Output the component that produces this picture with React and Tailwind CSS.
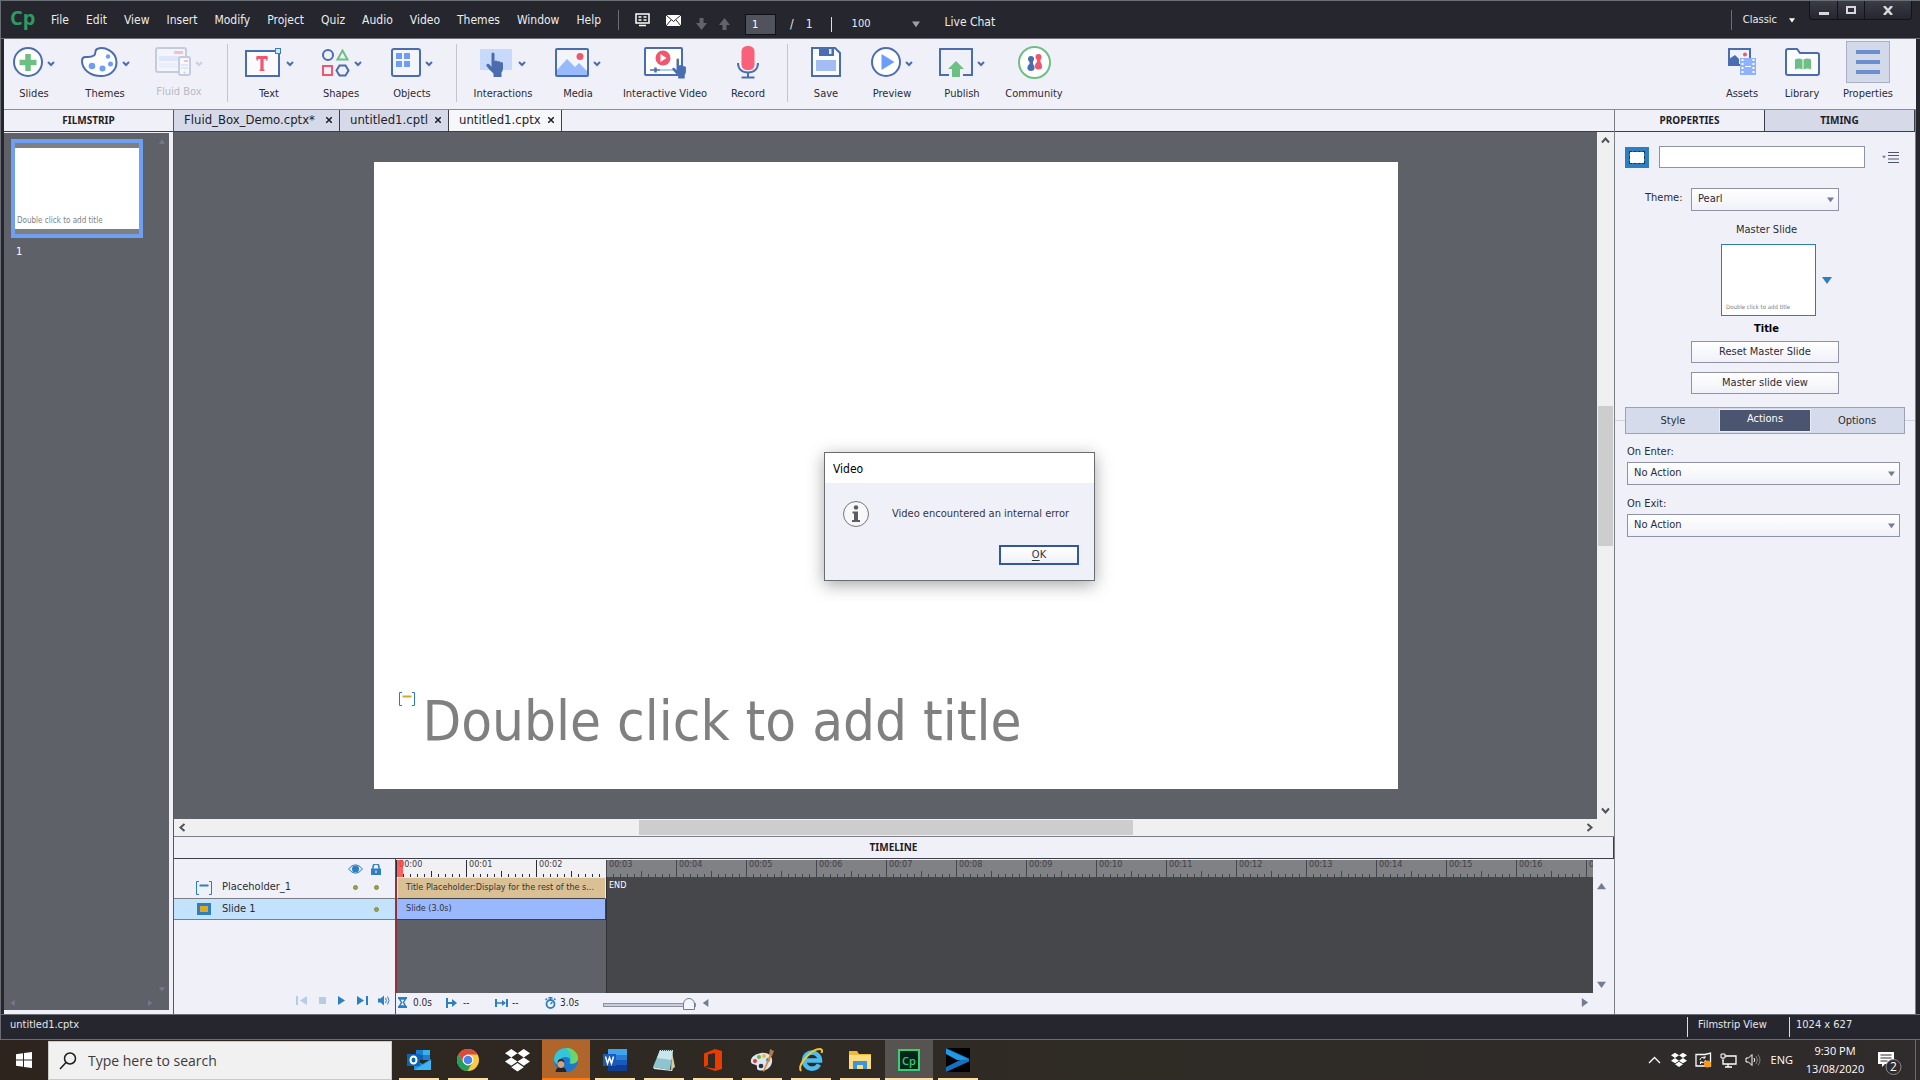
import React from "react";

const BLUE = "#4a6db0";
const SOFT = "#6f9df5";
const GREEN = "#6cc083";
const RED = "#f0566e";

/* ---------- toolbar icons ---------- */

const Chevron = ({ faded }) => (
  <svg width="8" height="6" viewBox="0 0 8 6" className="mt-1 shrink-0">
    <path d="M1 1l3 3 3-3" fill="none" stroke={faded ? "#c9d0e2" : BLUE} strokeWidth="2" />
  </svg>
);

const SlidesIcon = () => (
  <svg width="30" height="30" viewBox="0 0 30 30">
    <circle cx="15" cy="15" r="14" fill="#fff" stroke={BLUE} strokeWidth="2" />
    <path d="M15 7v17M6.500 15.500h17" stroke={GREEN} strokeWidth="5.500" />
  </svg>
);

const PaletteIcon = () => (
  <svg width="37" height="30" viewBox="0 0 37 30">
    <path
      d="M13 8.500C15.500 7 13 3.500 16 2 23 -1 35.500 4 35.500 15.500 35.500 24 28 29 20 29 9.500 29 1 22.500 1 14 1 11.500 2.500 10 4.500 10 8 10 10 10.500 13 8.500Z"
      fill="#fff" stroke={BLUE} strokeWidth="2"
    />
    <circle cx="11" cy="19" r="3.300" fill={SOFT} />
    <circle cx="21.500" cy="21.500" r="3" fill={SOFT} />
    <circle cx="29.500" cy="17" r="2.500" fill={SOFT} />
    <circle cx="27" cy="9.500" r="2.200" fill={SOFT} />
  </svg>
);

const FluidIcon = () => (
  <svg width="36" height="30" viewBox="0 0 36 30">
    <rect x="1" y="1" width="30" height="24" rx="2" fill="#f3f5fa" stroke="#c3cbdf" strokeWidth="2" />
    <rect x="19" y="4" width="9" height="3" fill="#f6bfc9" />
    <rect x="4" y="9" width="25" height="5" fill="#dde6fb" />
    <path d="M4 16h18v5H4z" fill="#e8eefb" />
    <rect x="24" y="10" width="11" height="18" rx="2" fill="#f6f8fc" stroke="#c3cbdf" strokeWidth="2" />
    <rect x="29" y="13" width="4" height="2" fill="#f6bfc9" />
    <path d="M26 18h7M26 21h7" stroke="#dde6fb" strokeWidth="2" />
    <circle cx="29.500" cy="25.500" r="1" fill="#c3cbdf" />
  </svg>
);

const TextIcon = () => (
  <svg width="37" height="30" viewBox="0 0 37 30">
    <rect x="1" y="4" width="33" height="25" fill="#fbfbfe" stroke={BLUE} strokeWidth="2" />
    <path d="M11.500 10.500h11M17 10v13.500" fill="none" stroke={RED} strokeWidth="3.200" />
    <path d="M12.200 10v3.500M21.800 10v3.500M14.500 23.300h5" fill="none" stroke={RED} strokeWidth="1.400" />
    <rect x="30.500" y="1.500" width="5" height="5" fill="#c9e6fb" stroke="#3c7fb5" />
  </svg>
);

const ShapesIcon = () => (
  <svg width="29" height="29" viewBox="0 0 29 29">
    <circle cx="7" cy="7" r="5" fill="none" stroke={BLUE} strokeWidth="2" />
    <path d="M21.500 2.500l5 9h-10z" fill="none" stroke={GREEN} strokeWidth="2" />
    <rect x="2" y="18" width="9" height="9" fill="none" stroke={RED} strokeWidth="2" />
    <path d="M18.500 17.500h6l3 5-3 5h-6l-3-5z" fill="none" stroke={BLUE} strokeWidth="2" />
  </svg>
);

const ObjectsIcon = () => (
  <svg width="30" height="29" viewBox="0 0 30 29">
    <rect x="1" y="1" width="28" height="27" rx="2" fill="#f3f5fb" stroke={BLUE} strokeWidth="2" />
    <path d="M5 5h6v6H5zM13 5h6v6h-6zM5 13h6v6H5zM13 13h6v6h-6z" fill={SOFT} />
  </svg>
);

const Hand = () => (
  <path
    d="M5.500 2q0-1.500 1.500-1.500T8.500 2v7.500q.300-1 1.500-1t1.500 1.300q.300-.800 1.400-.800t1.400 1.500q.400-.500 1.300-.500 1.400 0 1.400 2v4.500q0 2-1.500 4V25H7.500v-3.500Q3 17.500 .500 14q-.500-1.500 .700-2t2.300 .600L5.500 15z"
    fill={BLUE}
  />
);

const InteractionsIcon = () => (
  <svg width="34" height="32" viewBox="0 0 34 32">
    <rect x="0" y="3" width="32" height="21" fill="#c8dafc" />
    <g transform="translate(6 6)"><Hand /></g>
  </svg>
);

const MediaIcon = () => (
  <svg width="34" height="29" viewBox="0 0 34 29">
    <rect x="1" y="1" width="32" height="27" rx="1" fill="#f3f5fb" stroke={BLUE} strokeWidth="2" />
    <path d="M2 22l10-11 8 8 4-4 8 8v4H2z" fill="#98bafb" />
    <circle cx="25" cy="8.500" r="3.500" fill={RED} />
  </svg>
);

const InteractiveVideoIcon = () => (
  <svg width="42" height="33" viewBox="0 0 42 33">
    <rect x="1" y="2" width="37" height="27" rx="1" fill="#fff" stroke={BLUE} strokeWidth="2" />
    <circle cx="19" cy="12" r="7.500" fill={RED} />
    <path d="M16.500 8l6 4-6 4z" fill="#fff" />
    <path d="M6 24h10" stroke={BLUE} strokeWidth="1.500" />
    <path d="M11.500 21.500v5" stroke={BLUE} strokeWidth="2.500" />
    <path d="M16 24h16" stroke="#98bafb" strokeWidth="1.500" />
    <g transform="translate(28 12) scale(.82)"><Hand /></g>
  </svg>
);

const RecordIcon = () => (
  <svg width="22" height="33" viewBox="0 0 22 33">
    <rect x="4.500" y="0" width="13" height="24" rx="5.500" fill="#f9607a" />
    <path d="M1 17c0 6 4 9.500 10 9.500S21 23 21 17" fill="none" stroke={BLUE} strokeWidth="2" />
    <path d="M11 26v5M4.500 31.500h13" stroke={BLUE} strokeWidth="2" />
  </svg>
);

const SaveIcon = () => (
  <svg width="30" height="30" viewBox="0 0 30 30">
    <path d="M1 1h23l5 5v23H1z" fill="#fafbfe" stroke={BLUE} strokeWidth="2" />
    <path d="M8 1h15v8H8z" fill={BLUE} />
    <path d="M18 2h2.500v5H18z" fill="#dfe7f7" />
    <path d="M5 13h20v11H5z" fill="#a3bcf2" />
  </svg>
);

const PreviewIcon = () => (
  <svg width="30" height="30" viewBox="0 0 30 30">
    <circle cx="15" cy="15" r="14" fill="#fff" stroke={BLUE} strokeWidth="2" />
    <path d="M10.500 7l13 8-13 8z" fill="#6d9cff" />
  </svg>
);

const PublishIcon = () => (
  <svg width="34" height="30" viewBox="0 0 34 30">
    <path d="M10 28H1V2h32v26h-9" fill="none" stroke={BLUE} strokeWidth="2" />
    <path d="M17 14l8 8h-4v8h-8v-8H9z" fill={GREEN} />
  </svg>
);

const CommunityIcon = () => (
  <svg width="33" height="33" viewBox="0 0 33 33">
    <circle cx="16.500" cy="16.500" r="15.500" fill="#fff" stroke={GREEN} strokeWidth="2" />
    <g fill={RED}><circle cx="20.500" cy="11" r="3" /><path d="M19 13h3.500v3q2 2 1.500 5.500-.5 2-3.500 2t-3.500-2q-.500-3.500 2-5.500z" /></g>
    <g fill={BLUE}><circle cx="13" cy="13" r="3" /><path d="M11.500 15H15v3q2 1.500 1.500 5-.5 2-3.500 2t-3.500-2q-.500-3.500 2-5z" /></g>
  </svg>
);

const AssetsIcon = () => (
  <svg width="28" height="28" viewBox="0 0 28 28">
    <path d="M1 1h21v16H1z" fill="#eef2fb" stroke={BLUE} strokeWidth="2" />
    <path d="M1 11l6-4 4 4v7H0z" fill={BLUE} />
    <circle cx="17" cy="6.500" r="2" fill={RED} />
    <path d="M12 10h16v17H12z" fill="#8fb3fb" />
    <path d="M14.500 11v15M25.500 11v15" stroke="#fff" strokeWidth="2" strokeDasharray="2 2" />
    <path d="M17 18.500h6" stroke="#fff" />
  </svg>
);

const LibraryIcon = () => (
  <svg width="35" height="28" viewBox="0 0 35 28">
    <path d="M1 3q0-2 2-2h9l3 4h17q2 0 2 2v18q0 2-2 2H3q-2 0-2-2z" fill="#fbfcff" stroke={BLUE} strokeWidth="2" />
    <path d="M10 11.500q4-2 7.500 0v10q-3.500-2-7.500 0zM18.500 11.500q4-2 7.500 0v10q-3.500-2-7.500 0z" fill={GREEN} />
  </svg>
);

const ToolButton = ({ w, label, icon, chevron, faded }) => (
  <button className={`${w} flex shrink-0 flex-col items-center`}>
    <span className="flex h-[36px] items-center gap-1">
      {icon}
      {chevron && <Chevron faded={faded} />}
    </span>
    <span className={`whitespace-nowrap leading-4 ${faded ? "mt-1 text-[#b9bac4]" : "mt-1.5 text-[#2b2b35]"}`}>{label}</span>
  </button>
);

const Sep = ({ m }) => <span className={`${m} h-[58px] w-px shrink-0 bg-[#c4c6cc]`} />;

/* ---------- small glyphs ---------- */

const Tri = ({ dir, size = 9, color = "#747b93" }) => {
  const d = { up: "M0 8L5 1l5 7z", down: "M0 2l5 7 5-7z", left: "M8 0L1 5l7 5z", right: "M2 0l7 5-7 5z" }[dir];
  return (
    <svg width={size} height={size} viewBox="0 0 10 10" className="shrink-0"><path d={d} fill={color} /></svg>
  );
};

const Angle = ({ d }) => (
  <svg width="9" height="9" viewBox="0 0 9 9" className="shrink-0">
    <path d={d} fill="none" stroke="#50525a" strokeWidth="2" />
  </svg>
);

const PlaceholderGlyph = ({ bar = "#2d7fc1" }) => (
  <svg width="16" height="14" viewBox="0 0 16 14" className="shrink-0">
    <path d="M3 .500H.500v13H3M13 .500h2.500v13H13" fill="none" stroke="#2f7ab8" />
    <path d="M3.500 4.500h9" stroke={bar} strokeWidth="2" />
  </svg>
);

const Dot = () => <span className="h-[5px] w-[5px] rounded-full border border-[#6f8f60] bg-[#b59a2c]" />;

/* ---------- menu bar ---------- */

const MENUS = ["File", "Edit", "View", "Insert", "Modify", "Project", "Quiz", "Audio", "Video", "Themes", "Window", "Help"];

const MenuBar = () => (
  <header className="flex h-[39px] items-start border-b border-t border-b-[#707178] border-t-[#6a7076] bg-[#25262e] text-[12px] text-[#eceded]">
    <div className="flex w-full items-center">
      <span className="h-[38px] w-[50px] pl-[9px] font-['Open_Sans',sans-serif] text-[20px] font-bold leading-[34px] text-[#2f9a63]">Cp</span>
      <nav className="flex h-[38px] items-start gap-[17px] pt-[11px] leading-4">
        {MENUS.map((m) => <button key={m}>{m}</button>)}
      </nav>
      <span className="ml-[17px] mr-4 h-5 w-px bg-[#6b6d74]" />
      <svg width="15" height="14" viewBox="0 0 15 14"><path d="M1 1h13v9H1z" fill="none" stroke="#fff" strokeWidth="1.500" /><path d="M3.500 4h3M8.500 4h3M3.500 7h3M8.500 7h3M4 12.500h7" stroke="#fff" strokeWidth="1.500" /></svg>
      <svg width="15" height="11" viewBox="0 0 15 11" className="ml-4"><path d="M0 0h15v11H0z" fill="#fff" /><path d="M0 0l7.500 6.500L15 0M0 11l5-6M15 11l-5-6" fill="none" stroke="#25262e" /></svg>
      <svg width="11" height="12" viewBox="0 0 11 12" className="ml-[15px] mt-2"><path d="M3.500 0h4v5H11l-5.500 7L0 5h3.500z" fill="#62646b" /></svg>
      <svg width="11" height="12" viewBox="0 0 11 12" className="ml-3 mt-2"><path d="M3.500 12h4V7H11L5.500 0 0 7h3.500z" fill="#62646b" /></svg>
      <input aria-label="Slide number" defaultValue="1" className="ml-[15px] mt-2 h-[21px] w-[31px] border border-[#101116] bg-[#50525c] pl-1.5 text-[11px] text-white outline-none" />
      <span className="ml-3.5 mt-2">/</span>
      <span className="ml-3 mt-2">1</span>
      <span className="ml-[18px] mt-2 h-[15px] w-px bg-[#dcdde0]" />
      <button className="ml-5 mt-2 flex items-center justify-between gap-[42px] text-[11px]">100<Tri dir="down" size={8} color="#9fa1a8" /></button>
      <button className="ml-6 mt-1">Live Chat</button>
      <span className="flex-1" />
      <span className="h-5 w-px bg-[#6b6d74]" />
      <button className="ml-[11px] flex items-center gap-3 text-[11px]">Classic <Tri dir="down" size={6} color="#fff" /></button>
      <div className="ml-3.5 mr-2 flex h-[19px] self-start rounded-b border border-t-0 border-[#121318] bg-gradient-to-b from-[#3a3c46] to-[#25262e]">
        <button aria-label="Minimize" className="flex w-[27px] items-center justify-center pt-1.5"><span className="h-[3px] w-2.5 bg-[#d6d8dc]" /></button>
        <button aria-label="Maximize" className="flex w-[28px] items-center justify-center border-x border-[#121318]"><span className="h-2 w-2.5 border-2 border-[#d6d8dc]" /></button>
        <button aria-label="Close" className="flex w-[46px] items-center justify-center"><svg width="10" height="9" viewBox="0 0 10 9"><path d="M1 0l8 9M9 0L1 9" stroke="#d6d8dc" strokeWidth="2.500" /></svg></button>
      </div>
    </div>
  </header>
);

/* ---------- toolbar ---------- */

const Toolbar = () => (
  <div className="flex h-[71px] items-start border-b border-[#8b8d96] bg-[#f0f1f8] pt-[5px] text-[11px]">
    <ToolButton w="w-[60px]" label="Slides" icon={<SlidesIcon />} chevron />
    <ToolButton w="w-[82px]" label="Themes" icon={<PaletteIcon />} chevron />
    <ToolButton w="w-[66px]" label="Fluid Box" icon={<FluidIcon />} chevron faded />
    <Sep m="ml-[15px] mr-3" />
    <ToolButton w="w-[58px]" label="Text" icon={<TextIcon />} chevron />
    <ToolButton w="w-[86px]" label="Shapes" icon={<ShapesIcon />} chevron />
    <ToolButton w="w-[56px]" label="Objects" icon={<ObjectsIcon />} chevron />
    <Sep m="ml-4 mr-2" />
    <ToolButton w="w-[76px]" label="Interactions" icon={<InteractionsIcon />} chevron />
    <ToolButton w="w-[74px]" label="Media" icon={<MediaIcon />} chevron />
    <ToolButton w="w-[100px]" label="Interactive Video" icon={<InteractiveVideoIcon />} />
    <ToolButton w="w-[66px]" label="Record" icon={<RecordIcon />} />
    <Sep m="ml-1.5 mr-3" />
    <ToolButton w="w-[52px]" label="Save" icon={<SaveIcon />} />
    <ToolButton w="w-[80px]" label="Preview" icon={<PreviewIcon />} chevron />
    <ToolButton w="w-[60px]" label="Publish" icon={<PublishIcon />} chevron />
    <ToolButton w="w-[84px]" label="Community" icon={<CommunityIcon />} />
    <span className="flex-1" />
    <ToolButton w="w-[60px]" label="Assets" icon={<AssetsIcon />} />
    <ToolButton w="w-[60px]" label="Library" icon={<LibraryIcon />} />
    <ToolButton
      w="w-[72px]"
      label="Properties"
      icon={
        <span className="-mb-2 -mt-2 flex h-[42px] w-[44px] flex-col items-center justify-center gap-1.5 border border-[#a9b0c6] bg-[#d2d9e9]">
          <span className="h-1 w-6 bg-[#6c8fd0]" /><span className="h-1 w-6 bg-[#6c8fd0]" /><span className="h-1 w-6 bg-[#6c8fd0]" />
        </span>
      }
    />
    <span className="w-3 shrink-0" />
  </div>
);

/* ---------- left panel ---------- */

const PanelTitle = "font-['Noto_Sans',sans-serif] text-[10px] font-bold text-[#1f2027]";

const Filmstrip = () => (
  <aside className="flex w-[170px] shrink-0 flex-col border-r border-[#55575f] bg-[#f0f1f8]">
    <h2 className={`flex h-[22px] items-center justify-center border-b border-[#3d3f47] ${PanelTitle}`}>FILMSTRIP</h2>
    <div className="mb-1 mr-1 mt-px flex flex-1 flex-col justify-between bg-[#5f6169]">
      <div className="flex items-start justify-between pl-[7px] pr-1 pt-1.5">
        <div>
          <div className="w-[132px] border-4 border-[#6f9ff0] bg-[#7d7f83] py-[5px]">
            <div className="flex h-[81px] items-end bg-white pb-[3px] pl-0.5 text-[8px] leading-[10px] text-[#808080]">Double click to add title</div>
          </div>
          <p className="pl-[5px] pt-1.5 text-[11px] leading-4 text-white">1</p>
        </div>
        <Tri dir="up" size={6} color="#747893" />
      </div>
      <div className="flex flex-col pb-1 pr-1">
        <span className="self-end"><Tri dir="down" size={6} color="#747893" /></span>
        <div className="flex justify-between pl-1.5 pr-3 pt-2"><Tri dir="left" size={6} color="#747893" /><Tri dir="right" size={6} color="#747893" /></div>
      </div>
    </div>
  </aside>
);

/* ---------- document area ---------- */

const DocTab = ({ w, name, active }) => (
  <div className={`${w} flex shrink-0 items-center justify-between border-r border-[#3d3f47] pb-px pl-2.5 pr-[7px] ${active ? "bg-[#f6f7fb]" : "bg-[#d6dae8]"}`}>
    <span>{name}</span>
    <button aria-label={`Close ${name}`}><svg width="6" height="6" viewBox="0 0 6 6"><path d="M0 0l6 6M6 0L0 6" stroke="#1f2027" strokeWidth="1.500" /></svg></button>
  </div>
);

const Canvas = () => (
  <>
    <div className="flex min-h-0 flex-1">
      <div className="flex min-w-0 flex-1 items-center justify-center bg-[#5f6169]">
        <div className="flex h-[627px] w-[1024px] shrink-0 items-end bg-white pb-9 pl-[25px]">
          <div className="flex items-start gap-2">
            <span className="pt-[3px]"><PlaceholderGlyph bar="#cdaa35" /></span>
            <h1 className="text-[56px] leading-[64px] text-[#808080]">Double click to add title</h1>
          </div>
        </div>
      </div>
      <div className="flex w-[17px] shrink-0 flex-col items-center justify-between bg-[#f0f0f0] py-1">
        <Angle d="M1 6.500l3.500-4 3.500 4" />
        <span className="h-[140px] w-[15px] bg-[#cdcdcd]" />
        <Angle d="M1 2.500l3.500 4 3.500-4" />
      </div>
    </div>
    <div className="flex h-[17px] shrink-0 items-center justify-between bg-[#f0f0f0] pl-1 pr-5">
      <Angle d="M6.500 1l-4 3.500 4 3.500" />
      <span className="h-[15px] w-[494px] bg-[#cdcdcd]" />
      <Angle d="M2.500 1l4 3.500-4 3.500" />
    </div>
  </>
);

/* ---------- timeline ---------- */

const Second = ({ i }) => {
  const on = i < 3;
  const ink = on ? "#2c2d33" : "#44464c";
  return (
    <div className={`relative h-full w-[70px] shrink-0 border-l ${on ? "border-[#2c2d33] bg-[#f1f1f3]" : "border-[#44464c] bg-[#808184]"}`}>
      <svg width="69" height="18" viewBox="0 0 69 18" className="block">
        {[1, 2, 3, 4, 5, 6, 7, 8, 9].map((n) => (
          <path key={n} d={`M${n * 7 - 0.5} ${n === 5 ? 11 : 14}V18`} stroke={ink} />
        ))}
      </svg>
      <span className={`absolute left-0.5 top-0 text-[9px] leading-[9px] ${on ? "text-[#3c3d44]" : "text-[#3f4046]"}`}>
        {`00:${String(i).padStart(2, "0")}`}
      </span>
      {i === 0 && <span className="absolute left-0 top-0 h-full w-[6px] bg-[#ff3b3b]/80" />}
    </div>
  );
};

const Transport = () => (
  <div className="flex h-[28px] items-center justify-end gap-3 pr-[5px] text-[#2d7fc1]">
    <button aria-label="Rewind"><svg width="11" height="9" viewBox="0 0 11 9"><path d="M0 0h2v9H0zM11 0v9L4 4.500z" fill="#b4cce4" /></svg></button>
    <button aria-label="Stop"><svg width="7" height="7" viewBox="0 0 7 7"><path d="M0 0h7v7H0z" fill="#b4cce4" /></svg></button>
    <button aria-label="Play"><svg width="7" height="9" viewBox="0 0 7 9"><path d="M0 0l7 4.500L0 9z" fill="currentColor" /></svg></button>
    <button aria-label="Go to end"><svg width="11" height="9" viewBox="0 0 11 9"><path d="M0 0l7 4.500L0 9zM9 0h2v9H9z" fill="currentColor" /></svg></button>
    <button aria-label="Audio" className="-ml-0.5"><svg width="12" height="11" viewBox="0 0 12 11"><path d="M0 3.500h2.500L6 .500v10L2.500 7.500H0z" fill="currentColor" /><path d="M7.500 3q1.800 2.500 0 5M9.500 1.500q3 4 0 8" fill="none" stroke="currentColor" /></svg></button>
  </div>
);

const Timeline = () => (
  <section className="shrink-0 border-t border-[#7c7e86] bg-[#f0f1f8] text-[11px] text-[#2b2b35]">
    <h2 className={`flex h-[22px] items-center justify-center border-b border-r border-[#3d3f47] ${PanelTitle}`}>TIMELINE</h2>
    <div className="flex">
      <div className="flex w-[222px] shrink-0 flex-col border-r border-[#50525a]">
        <div className="flex h-[18px] items-center justify-end gap-2 pr-3.5 pt-0.5 text-[#2d7fc1]">
          <svg width="15" height="10" viewBox="0 0 15 10"><path d="M.500 5Q7.500-3.500 14.500 5 7.500 13.500 .500 5z" fill="#dfeaf6" stroke="currentColor" /><circle cx="7.500" cy="5" r="3.500" fill="currentColor" /></svg>
          <svg width="10" height="11" viewBox="0 0 10 11"><path d="M0 4.500h10V11H0z" fill="currentColor" /><path d="M2 5V3a3 3 0 016 0v2" fill="none" stroke="currentColor" strokeWidth="1.500" /><path d="M5 6.500v2.500" stroke="#fff" /></svg>
        </div>
        <div className="flex h-[22px] items-center border-b border-[#7c7e86] pl-[22px] pr-4">
          <PlaceholderGlyph /><span className="flex-1 pl-2.5">Placeholder_1</span><span className="flex gap-4"><Dot /><Dot /></span>
        </div>
        <div className="flex h-[21px] items-center border-b border-[#7c7e86] bg-[#c3e2fb] pl-[23px] pr-4">
          <span className="h-3 w-3.5 border-[3px] border-[#2d7fc1] bg-[#e0a81c]" /><span className="flex-1 pl-[11px]">Slide 1</span><Dot />
        </div>
        <div className="flex flex-1 flex-col justify-end"><Transport /></div>
      </div>
      <div className="min-w-0 flex-1">
        <div className="flex h-[18px] overflow-hidden border-t border-[#f0f1f8]">
          {Array.from({ length: 18 }, (_, i) => <Second key={i} i={i} />)}
        </div>
        <div className="flex h-[116px] bg-[#46474b]">
          <div className="w-[210px] shrink-0 border-l border-[#8d2f38] bg-[#5f6169] text-[9px] text-[#33333a]">
            <div className="flex h-[22px] items-center border border-b-[#3d3f47] border-l-[#f4ead3] border-r-[#f4ead3] border-t-[#f4ead3] bg-[#d9c095] pl-2">Title Placeholder:Display for the rest of the s...</div>
            <div className="flex h-[21px] items-center border-b border-r border-[#3d3f47] bg-[#99b8fd] pl-[9px]">Slide (3.0s)</div>
          </div>
          <span className="border-l border-[#303136] pl-0.5 pt-0.5 text-[9px] leading-3 text-white">END</span>
        </div>
        <div className="flex h-[21px] items-center pb-0.5 text-[10px]">
          <svg width="9" height="11" viewBox="0 0 9 11" className="ml-0.5 text-[#2d7fc1]"><path d="M0 1h9M0 10h9" stroke="currentColor" strokeWidth="2" /><path d="M1.500 2h6L5.500 5.500l2 3.500h-6l2-3.500z" fill="none" stroke="currentColor" strokeWidth="1.500" /></svg>
          <span className="ml-1.5 w-[33px]">0.0s</span>
          <svg width="11" height="10" viewBox="0 0 11 10" className="text-[#2d7fc1]"><path d="M1 0v10M1 5h7" stroke="currentColor" strokeWidth="2" /><path d="M6 1l5 4-5 4z" fill="currentColor" /></svg>
          <span className="ml-1.5 w-8">--</span>
          <svg width="13" height="10" viewBox="0 0 13 10" className="text-[#2d7fc1]"><path d="M1 1v8M12 1v8" stroke="currentColor" strokeWidth="2" /><path d="M1 5h7" stroke="currentColor" strokeWidth="1.500" /><path d="M7 2l4 3-4 3z" fill="currentColor" /></svg>
          <span className="ml-1 w-[33px]">--</span>
          <svg width="11" height="12" viewBox="0 0 11 12" className="text-[#2d7fc1]"><circle cx="5.500" cy="7" r="4" fill="none" stroke="currentColor" strokeWidth="1.800" /><path d="M5.500 3V0M3.500 .800h4M5.500 7l2-2M.500 3l1.500-1.500M10.500 3L9 1.500" stroke="currentColor" strokeWidth="1.400" /></svg>
          <span className="ml-1 w-[43px]">3.0s</span>
          <input
            type="range" aria-label="Timeline zoom" defaultValue="100"
            className="mt-1 h-3 w-[93px] appearance-none bg-transparent [&::-webkit-slider-runnable-track]:h-1 [&::-webkit-slider-runnable-track]:border [&::-webkit-slider-runnable-track]:border-[#8d90a4] [&::-webkit-slider-runnable-track]:bg-[#c9ccdb] [&::-webkit-slider-thumb]:-mt-1.5 [&::-webkit-slider-thumb]:h-3 [&::-webkit-slider-thumb]:w-3 [&::-webkit-slider-thumb]:appearance-none [&::-webkit-slider-thumb]:rounded-t-full [&::-webkit-slider-thumb]:border [&::-webkit-slider-thumb]:border-[#747b93] [&::-webkit-slider-thumb]:bg-[#f4f5fa]"
          />
          <span className="ml-1.5"><Tri dir="left" size={8} /></span>
          <span className="ml-auto mr-1"><Tri dir="right" size={9} /></span>
        </div>
      </div>
      <div className="flex h-[134px] w-[21px] shrink-0 flex-col items-center justify-between pb-1 pr-1 pt-[23px]">
        <Tri dir="up" /><Tri dir="down" />
      </div>
    </div>
  </section>
);

/* ---------- properties ---------- */

const Select = ({ id, value, w }) => (
  <span className={`relative h-[23px] ${w}`}>
    <select id={id} defaultValue={value} className="h-full w-full appearance-none border border-[#9092a8] bg-gradient-to-b from-white to-[#f0f1f8] pb-px pl-1.5 text-[11px] text-[#2b2b35] outline-none">
      <option>{value}</option>
    </select>
    <span className="pointer-events-none absolute right-[5px] top-[8px]"><Tri dir="down" size={7} /></span>
  </span>
);

const PanelButton = ({ children }) => (
  <button className="flex h-[22px] w-[148px] items-center justify-center border border-[#9092a8] bg-gradient-to-b from-white to-[#f0f1f8]">{children}</button>
);

const Properties = () => (
  <aside className="flex w-[302px] shrink-0 flex-col border-l border-r border-[#7c7e86] bg-[#f0f1f8] text-[11px] text-[#2b2b35]">
    <div className={`flex h-[22px] border-b border-[#3d3f47] ${PanelTitle}`}>
      <button className="flex-1">PROPERTIES</button>
      <button className="flex-1 border-l border-r border-[#3d3f47] bg-[#d6dae8]">TIMING</button>
    </div>
    <div className="flex items-center pl-2.5 pr-4 pt-3.5">
      <span className="flex h-[21px] w-[24px] items-center justify-center bg-[#2d7fc1]"><span className="h-[13px] w-4 border border-dashed border-[#1d3c58] bg-white bg-clip-padding" /></span>
      <input aria-label="Slide name" className="ml-2.5 h-[22px] min-w-0 flex-1 border border-[#9092a8] bg-white px-1 outline-none" />
      <button aria-label="Panel menu" className="ml-[17px] flex items-center gap-0.5">
        <Tri dir="down" size={4} />
        <svg width="11" height="11" viewBox="0 0 11 11"><path d="M0 .500h11M0 3.500h11M0 7h11M0 10.500h11" stroke="#4d566e" /></svg>
      </button>
    </div>
    <div className="mt-5 flex">
      <label htmlFor="theme" className="w-[76px] shrink-0 pl-[30px] leading-5">Theme:</label>
      <Select id="theme" value="Pearl" w="w-[148px]" />
    </div>
    <div className="flex flex-col items-center pr-[9px]">
      <p className="mt-[11px] pl-3 leading-4">Master Slide</p>
      <div className="mt-1.5 flex items-center gap-1.5 pl-8">
        <div className="flex h-[72px] w-[95px] items-end border border-[#2d7fa8] bg-white pb-1 pl-1 text-[6px] leading-[8px] text-[#808080]">Double click to add title</div>
        <button aria-label="Choose master slide"><Tri dir="down" size={10} color="#2d7fc1" /></button>
      </div>
      <p className="mt-[5px] pl-3 font-bold leading-4 text-black">Title</p>
    </div>
    <div className="mt-1 flex flex-col gap-[9px] pl-[76px]">
      <PanelButton>Reset Master Slide</PanelButton>
      <PanelButton>Master slide view</PanelButton>
    </div>
    <div className="mt-[13px] flex items-center">
      <span className="h-px w-2.5 bg-[#d0d3de]" />
      <div className="flex h-[27px] flex-1 border border-[#9da1b8] bg-[#d5dbea]">
        <button className="flex-1 pt-px">Style</button>
        <button className="my-0.5 w-[90px] bg-[#4b5570] pb-0.5 text-white outline outline-1 outline-[#e8ebf4]">Actions</button>
        <button className="flex-1 pt-px">Options</button>
      </div>
      <span className="h-px w-2.5 bg-[#d0d3de]" />
    </div>
    <div className="flex flex-col pl-3 pr-[15px] pt-2.5">
      <label htmlFor="enter" className="leading-4">On Enter:</label>
      <Select id="enter" value="No Action" w="mt-0.5 w-full" />
      <label htmlFor="exit" className="mt-[11px] leading-4">On Exit:</label>
      <Select id="exit" value="No Action" w="mt-0.5 w-full" />
    </div>
  </aside>
);

/* ---------- dialog ---------- */

const ErrorDialog = () => (
  <div className="absolute inset-0 flex items-center justify-center pb-[7px] pr-0.5">
    <div role="dialog" aria-labelledby="dlg-title" className="w-[271px] border border-[#6b6c72] bg-[#f0f1f8] text-[11px] text-[#33343c] shadow-[0_4px_16px_rgba(0,0,0,0.35)]">
      <h2 id="dlg-title" className="h-[30px] bg-white pl-2 text-[12px] leading-8 text-black">Video</h2>
      <div className="flex items-center pl-[17px] pt-[17px]">
        <svg width="28" height="28" viewBox="0 0 28 28">
          <circle cx="14" cy="14" r="12.500" fill="#f8f8fb" stroke="#75767b" />
          <circle cx="14" cy="7.500" r="2.200" fill="#5c5d61" />
          <path d="M10.500 11.500h5.500V20h2v2h-8v-2h2v-6.500h-1.500z" fill="#5c5d61" />
        </svg>
        <p className="pl-[22px] leading-4">Video encountered an internal error</p>
      </div>
      <div className="flex justify-end pb-[15px] pr-[15px] pt-[17px]">
        <button className="h-5 w-20 border-2 border-[#31589c] bg-gradient-to-b from-white to-[#f0f1f8] leading-4"><span className="underline underline-offset-2">O</span>K</button>
      </div>
    </div>
  </div>
);

/* ---------- taskbar ---------- */

const Dropbox = ({ s }) => (
  <svg width={s} height={s} viewBox="0 0 24 24" fill="#fff">
    <path d="M6 1L0 5l6 4 6-4zM18 1l-6 4 6 4 6-4zM0 13l6 4 6-4-6-4zM18 9l-6 4 6 4 6-4zM6 18.500l6 4 6-4-6-4z" />
  </svg>
);

const Outlook = () => (
  <svg width="24" height="24" viewBox="0 0 24 24">
    <path d="M9 2h14v10H9z" fill="#1a7fd4" /><path d="M16 2h7v5h-7z" fill="#35b1f0" /><path d="M9 7h7v5H9z" fill="#0f5ea8" />
    <path d="M7 11l8.500 5L24 11v11H7z" fill="#1e90dc" /><path d="M7 22l17-10v10z" fill="#3db6f2" />
    <path d="M0 6h13v12H0z" fill="#0a64b8" /><ellipse cx="6.500" cy="12" rx="3" ry="3.500" fill="none" stroke="#fff" strokeWidth="2" />
  </svg>
);
const Chrome = () => (
  <svg width="24" height="24" viewBox="0 0 24 24">
    <circle cx="12" cy="12" r="11" fill="#fcca3f" />
    <path d="M2.500 6.500A11 11 0 0121.500 6.500H12L7.200 14.800z" fill="#db4a3c" />
    <path d="M2.500 6.500l4.800 8.300L12 17.500 10.500 23A11 11 0 012.500 6.500z" fill="#20a05c" />
    <path d="M7.300 14.800A5.500 5.500 0 0016 15.500L11.500 23 10 22.800z" fill="#20a05c" />
    <circle cx="12" cy="12" r="5.400" fill="#fff" /><circle cx="12" cy="12" r="4.300" fill="#4a84ec" />
  </svg>
);
const Edge = () => (
  <svg width="26" height="26" viewBox="0 0 26 26">
    <circle cx="13" cy="13" r="12" fill="#1c78cf" />
    <path d="M1 13C1 5 7 1 13 1c7 0 12 5 12 10 0 5-5 6.500-8.500 5 2-3 0-6-4-6-5 0-8 4-8 8Q1 15 1 13z" fill="#35c5d8" />
    <path d="M13 1c7 0 12 5 12 10 0 5-5 6.500-8.500 5 2-2 3-9-3.500-15z" fill="#69d66c" />
    <path d="M2.500 25q.500-5 5.500-5t5.500 5z" fill="#22232b" /><ellipse cx="8" cy="17" rx="3.200" ry="4" fill="#d9a07e" /><path d="M4.600 16q0-4 3.400-4t3.400 4q-1.500-2-3.400-2t-3.400 2z" fill="#3a241a" />
  </svg>
);
const Word = () => (
  <svg width="25" height="24" viewBox="0 0 25 24">
    <path d="M5 1h19v6H5z" fill="#41a5ee" /><path d="M5 7h19v5H5z" fill="#2b7cd3" /><path d="M5 12h19v5H5z" fill="#185abd" /><path d="M5 17h19v6H5z" fill="#103f91" />
    <path d="M0 6h13v12H0z" fill="#185abd" /><path d="M2.500 8.500l2 7 2-6 2 6 2-7" fill="none" stroke="#fff" strokeWidth="1.500" />
  </svg>
);
const Notepad = () => (
  <svg width="24" height="24" viewBox="0 0 24 24">
    <path d="M20 4l3 15-4 3z" fill="#d8cc9c" /><path d="M8 2h13l-3 20L1 19z" fill="#8cc4d0" /><path d="M8 2h13l-1.500 10L5 10z" fill="#c9e6ec" /><path d="M1 19l17 3 3-1-1 2-18-2z" fill="#e8eef0" />
    <path d="M9 2h12" stroke="#3b4750" strokeDasharray="1 1" strokeWidth="2" />
  </svg>
);
const Office = () => (
  <svg width="20" height="24" viewBox="0 0 20 24"><path d="M1 5.500L12 1l7 2v18l-7 2L1 19l11 1.500V5L5 6.500v10.700L1 19z" fill="#eb3c00" /></svg>
);
const Paint = () => (
  <svg width="25" height="25" viewBox="0 0 25 25">
    <path d="M11 5c7-1 12 3 11 9-1 7-8 10-14 8-2-1 0-4-2-5S0 16 1 12s5-6 10-7z" fill="#dbe6f0" />
    <circle cx="5" cy="13" r="2" fill="#d83b3b" /><circle cx="9" cy="9" r="2" fill="#69b444" /><circle cx="14" cy="8" r="2" fill="#f0bb32" /><circle cx="11" cy="18" r="2.300" fill="#252f40" /><circle cx="18" cy="12" r="2" fill="#3b7ed0" />
    <path d="M20 6l2 1-8 17-1-1z" fill="#e08a2c" /><path d="M20 1l4 2-2 5-3-1z" fill="#b07a4c" />
  </svg>
);
const IE = () => (
  <svg width="25" height="24" viewBox="0 0 25 24">
    <path d="M20 16.500A8 8 0 1121 12.500H6" fill="none" stroke="#4cbdf0" strokeWidth="4.500" />
    <path d="M2 23C-2 17 12 1 21 1c2 0 2.500 1.500 1.500 4" fill="none" stroke="#f3c52e" strokeWidth="2" />
  </svg>
);
const Explorer = () => (
  <svg width="24" height="20" viewBox="0 0 24 20"><path d="M1 1h8l2 3h12v15H1z" fill="#f0b93a" /><path d="M1 5h22v14H1z" fill="#fcdc7e" /><path d="M5 19v-8h14v8h-4v-4H9v4z" fill="#3d94d8" /></svg>
);
const Captivate = () => (
  <span className="flex h-[22px] w-[22px] items-center justify-center border-2 border-[#35cf76] bg-[#04251a] font-['Open_Sans',sans-serif] text-[11px] font-semibold leading-none text-[#35cf76]">Cp</span>
);
const Arrow = () => (
  <svg width="24" height="24" viewBox="0 0 24 24"><path d="M0 0h24v24H0z" fill="#000" /><path d="M0 0l23 10.500v3L0 24v-5l14-7L0 5.500z" fill="#1372c0" /><path d="M0 1l23 10.500L11 12 0 6z" fill="#1f9ae8" /></svg>
);

const APPS = [
  ["Outlook", <Outlook />, "open"], ["Chrome", <Chrome />, "open"], ["Dropbox", <Dropbox s={25} />, ""], ["Edge", <Edge />, "alert"],
  ["Word", <Word />, "open"], ["Notepad", <Notepad />, "open"], ["Office", <Office />, "open"], ["Paint", <Paint />, "open"],
  ["Internet Explorer", <IE />, "open"], ["File Explorer", <Explorer />, "open"], ["Captivate", <Captivate />, "active"], ["Player", <Arrow />, "open"],
];

const APP_BG = { open: "", "": "", alert: "bg-[#b0652a]", active: "bg-[#575350]" };
const APP_LINE = { open: "w-10 bg-[#fbdfa3]", "": "w-0", alert: "w-full bg-[#ff7a10]", active: "w-full bg-[#fbdfa3]" };

const Taskbar = () => (
  <footer className="flex h-10 shrink-0 items-stretch bg-gradient-to-r from-[#2e241e] via-[#2f2b24] to-[#302b2c] font-['Open_Sans',sans-serif] text-[11px] text-white">
    <button aria-label="Start" className="flex w-12 items-center justify-center">
      <svg width="16" height="16" viewBox="0 0 16 16"><path d="M0 2.300L7 1.200V7.500H0zM8 1l8-1v7.500H8zM0 8.500h7v6.300L0 13.800zM8 8.500h8V16l-8-1z" fill="#fff" /></svg>
    </button>
    <div className="mt-px flex w-[344px] shrink-0 items-center border border-[#c9c9c9] bg-[#f1f1f1] pl-2.5">
      <svg width="18" height="18" viewBox="0 0 18 18"><circle cx="11" cy="6.500" r="5.500" fill="none" stroke="#1c1c1c" strokeWidth="1.500" /><path d="M7 10.500L1 17" stroke="#1c1c1c" strokeWidth="1.500" /></svg>
      <input aria-label="Search" placeholder="Type here to search" className="ml-[11px] min-w-0 flex-1 bg-transparent text-[14px] outline-none placeholder:text-[#3c3c3c]" />
    </div>
    <div className="ml-[3px] flex gap-px">
      {APPS.map(([name, icon, state]) => (
        <button key={name} aria-label={name} className={`flex w-12 flex-col items-center ${APP_BG[state]}`}>
          <span className="flex flex-1 items-center pt-0.5">{icon}</span>
          <span className={`h-0.5 ${APP_LINE[state]}`} />
        </button>
      ))}
    </div>
    <div className="ml-auto flex items-center gap-2">
      <svg width="13" height="8" viewBox="0 0 13 8"><path d="M1 7l5.500-5.500L12 7" fill="none" stroke="#fff" strokeWidth="1.300" /></svg>
      <span className="pl-0.5"><Dropbox s={16} /></span>
      <svg width="17" height="16" viewBox="0 0 17 16"><path d="M1 2.500h9L15.500 1v13H1z" fill="none" stroke="#fff" strokeWidth="1.300" /><path d="M5 8a3 3 0 015-2M10.500 8a3 3 0 01-5 2M10 4v2H8M5.500 12v-2h2" fill="none" stroke="#fff" /><circle cx="12.500" cy="12" r="3.500" fill="#fb9a13" /></svg>
      <svg width="17" height="15" viewBox="0 0 17 15"><path d="M5 3h11v8H3V7M8 11v3M5 14h7" fill="none" stroke="#fff" strokeWidth="1.300" /><path d="M1 1h4v4H1zM3 5v3" fill="#3a3634" stroke="#fff" /></svg>
      <svg width="16" height="14" viewBox="0 0 16 14"><path d="M1 5h2.500L7 1.500v11L3.500 9H1z" fill="none" stroke="#fff" /><path d="M9 5q1.500 2 0 4" fill="none" stroke="#fff" /><path d="M11 3q3 4 0 8M13 1.500q4 5.500 0 11" fill="none" stroke="#84807e" /></svg>
      <span className="pl-0.5 text-[11px]">ENG</span>
      <div className="w-[68px] text-center leading-[18px]"><p>9:30 PM</p><p>13/08/2020</p></div>
      <button aria-label="Notifications" className="relative mr-1 w-[26px]">
        <svg width="26" height="25" viewBox="0 0 26 25" className="mt-1.5"><path d="M1 1h16v12H8l-3 3v-3H1z" fill="#fff" /><path d="M3.500 4h11M3.500 7h11M3.500 10h7" stroke="#302b2c" /><circle cx="16.500" cy="16" r="7.500" fill="#302b2c" stroke="#8d8988" /></svg>
        <span className="absolute left-[13px] top-[13px] text-[12px] leading-[18px]">2</span>
      </button>
      <span className="mr-1 h-full w-px bg-[#6f6b6a]" />
    </div>
  </footer>
);

export default function App() {
  return (
    <div className="flex min-h-screen flex-col bg-[#25262e] font-['DejaVu_Sans_Condensed','DejaVu_Sans','Noto_Sans',sans-serif]">
      <div className="relative flex flex-1 flex-col border-l border-[#6b6d74]">
        <MenuBar />
        <main className="ml-[3px] mr-1 flex flex-1 flex-col">
          <Toolbar />
          <div className="flex flex-1">
            <Filmstrip />
            <div className="flex min-w-0 flex-1 flex-col bg-[#f0f1f8]">
              <div className="flex h-[22px] shrink-0 border-b border-[#3d3f47] text-[13px] text-[#1f2027]">
                <DocTab w="w-[166px]" name="Fluid_Box_Demo.cptx*" />
                <DocTab w="w-[109px]" name="untitled1.cptl" />
                <DocTab w="w-[113px]" name="untitled1.cptx" active />
              </div>
              <Canvas />
              <Timeline />
            </div>
            <Properties />
          </div>
        </main>
        <div className="flex h-[26px] shrink-0 items-start border-b border-t border-[#6b6d74] text-[11px] leading-5 text-[#e6e7ea]">
          <span className="pl-[9px]">untitled1.cptx</span>
          <span className="ml-auto mt-0.5 h-5 w-px bg-[#dcdde0]" />
          <span className="w-[101px] pl-2.5">Filmstrip View</span>
          <span className="mt-0.5 h-5 w-px bg-[#dcdde0]" />
          <span className="w-[130px] pl-1.5">1024 x 627</span>
        </div>
        <ErrorDialog />
      </div>
      <Taskbar />
    </div>
  );
}
